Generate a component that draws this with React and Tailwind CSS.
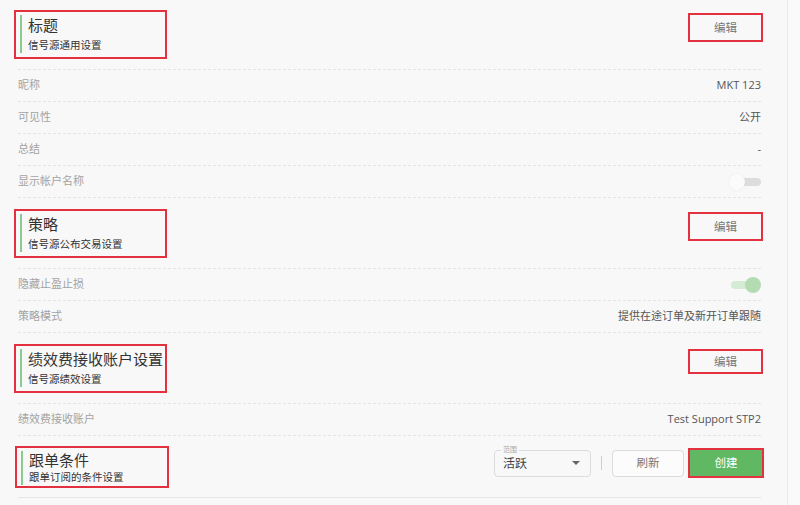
import { useState } from "react";

// ----------------------------------------------------------------------

const FONT = {
  fontFamily: '"Open Sans", "Noto Sans CJK SC", "Noto Sans", sans-serif',
};

function SectionHeader({ title, subtitle, compact = false, children }) {
  return (
    <div
      className={
        compact
          ? "flex items-start justify-between pt-[10px] pb-[9px] border-b border-solid border-[#e6e6e6]"
          : "flex items-start justify-between pt-[10px] pb-[10px] border-b border-dashed border-[#e4e4e4]"
      }
    >
      <div
        className={
          compact
            ? "-ml-[3px] w-[154px] h-[42px] border-2 border-[#e3313f] pl-[4px] pt-[3px]"
            : "-ml-[4px] w-[153px] h-[49px] border-2 border-[#e3313f] pl-[4px] pt-[3px]"
        }
      >
        <div className="border-l-2 border-[#8cc98e] pl-[6px]">
          <div
            className={
              compact
                ? "text-[15px] leading-[19px] text-[#333]"
                : "text-[15px] leading-[20px] text-[#333]"
            }
          >
            {title}
          </div>
          <div
            className={
              compact
                ? "text-[10.5px] leading-[15px] text-[#333]"
                : "mt-[2px] text-[10.5px] leading-[16px] text-[#333]"
            }
          >
            {subtitle}
          </div>
        </div>
      </div>
      {children}
    </div>
  );
}

function EditButton({ short = false }) {
  return (
    <button
      className={
        short
          ? "mt-[5px] -mr-[2px] w-[75px] h-[25px] border-2 border-[#e3313f] text-[11.5px] text-[#777]"
          : "mt-[3px] -mr-[2px] w-[75px] h-[29px] border-2 border-[#e3313f] text-[11.5px] text-[#777]"
      }
    >
      编辑
    </button>
  );
}

function Row({ label, children }) {
  return (
    <div className="flex items-center justify-between h-[32px] border-b border-dashed border-[#e4e4e4]">
      <span className="text-[11px] text-[#a3a3a3]">{label}</span>
      <span className="text-[11px] text-[#555]">{children}</span>
    </div>
  );
}

function Toggle({ on }) {
  if (on) {
    return (
      <span className="relative block w-[30px] h-[16px]">
        <span className="absolute left-0 top-[4px] w-[24px] h-[8px] rounded-full bg-[#d4ebd4]" />
        <span className="absolute right-0 top-0 w-[16px] h-[16px] rounded-full bg-[#b3dcb3]" />
      </span>
    );
  }
  return (
    <span className="relative block w-[32px] h-[16px]">
      <span className="absolute right-0 top-[4px] w-[22px] h-[8px] rounded-full bg-[#dddddd]" />
      <span className="absolute left-0 top-0 w-[16px] h-[16px] rounded-full bg-[#fbfbfb] shadow-[0_0_2px_rgba(0,0,0,0.08)]" />
    </span>
  );
}

export default function App() {
  const [scope] = useState("活跃");

  return (
    <div className="flex w-[800px] h-[505px] bg-[#fafafa] overflow-hidden" style={FONT}>
      <div className="w-[788px] h-full bg-[#f8f8f8] border-r border-[#e9e9e9] pl-[18px] pr-[26px]">
        {/* 标题 */}
        <SectionHeader title="标题" subtitle="信号源通用设置">
          <EditButton />
        </SectionHeader>
        <Row label="昵称">MKT 123</Row>
        <Row label="可见性">公开</Row>
        <Row label="总结">-</Row>
        <Row label="显示帐户名称">
          <Toggle on={false} />
        </Row>

        {/* 策略 */}
        <div className="pt-px">
          <SectionHeader title="策略" subtitle="信号源公布交易设置">
            <EditButton />
          </SectionHeader>
        </div>
        <Row label="隐藏止盈止损">
          <Toggle on />
        </Row>
        <Row label="策略模式">提供在途订单及新开订单跟随</Row>

        {/* 绩效费接收账户设置 */}
        <div className="pt-px">
          <SectionHeader title="绩效费接收账户设置" subtitle="信号源绩效设置">
            <EditButton short />
          </SectionHeader>
        </div>
        <Row label="绩效费接收账户">Test Support STP2</Row>

        {/* 跟单条件 */}
        <SectionHeader title="跟单条件" subtitle="跟单订阅的条件设置" compact>
          <div className="flex items-center mt-[2px] -mr-[3px]">
            <div className="relative w-[97px] h-[27px] rounded-[4px] border border-[#dcdcdc] flex items-center justify-between pl-[8px] pr-[10px]">
              <span className="absolute -top-[5px] left-[6px] px-[2px] bg-[#f8f8f8] text-[7px] leading-[8px] text-[#aaa]">
                范围
              </span>
              <span className="text-[12px] text-[#444] mt-[1px]">{scope}</span>
              <span className="w-0 h-0 border-l-[4px] border-r-[4px] border-t-[4px] border-l-transparent border-r-transparent border-t-[#666]" />
            </div>
            <span className="mx-[10px] w-px h-[14px] bg-[#cfcfcf]" />
            <button className="w-[72px] h-[27px] rounded-[4px] border border-[#dcdcdc] bg-[#fcfcfc] text-[11.5px] text-[#777]">
              刷新
            </button>
            <button className="ml-[4px] w-[76px] h-[30px] border-2 border-[#e3313f] bg-[#60b862] text-[11.5px] text-white">
              创建
            </button>
          </div>
        </SectionHeader>
      </div>
    </div>
  );
}
